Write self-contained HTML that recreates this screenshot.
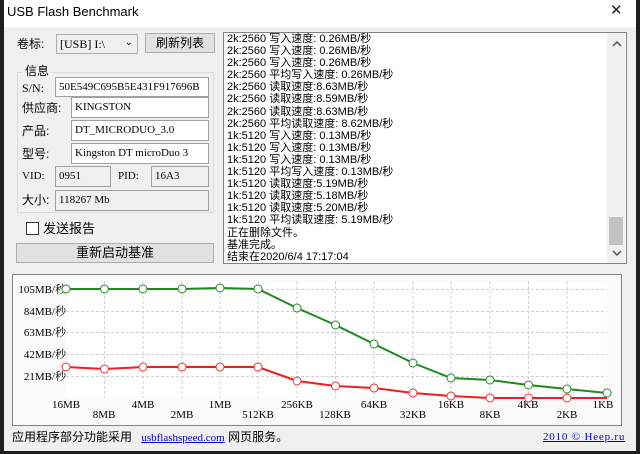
<!DOCTYPE html>
<html><head><meta charset="utf-8"><style>
*{margin:0;padding:0;box-sizing:border-box}
body{width:640px;height:454px;background:#1e1e1e;position:relative;overflow:hidden;font-family:"Liberation Sans","Noto Sans CJK SC",sans-serif;font-size:12px;line-height:14px;color:#000}
.win{position:absolute;left:4px;top:0;width:632px;height:451px;background:#f0f0f0}
.title{position:absolute;left:0;top:0;width:632px;height:27px;background:#fff;font-size:13px;line-height:16px;padding:4px 0 0 3px}
.a{position:absolute}
.fld{position:absolute;background:#fff;border:1px solid #a0a0a0;font-family:"Liberation Serif","Noto Serif CJK SC",serif;font-size:11px;line-height:14px;padding:2px 0 0 3px;white-space:nowrap;overflow:hidden}
.ro{background:#f0f0f0}
.btn{position:absolute;background:#e1e1e1;border:1px solid #adadad;text-align:center;line-height:16px}
.log{position:absolute;left:219px;top:32px;width:404px;height:232px;background:#fff;border:1px solid #828282;font-size:11px;line-height:12.1px;padding:0 0 0 3px;font-family:"Liberation Sans","Noto Sans CJK SC",sans-serif}
.log div{height:12.1px;white-space:nowrap}
</style></head><body>
<div class="win">
<div class="title">USB Flash Benchmark<span class="a" style="left:606px;top:3px;font-size:15px;font-weight:normal;color:#222">✕</span></div>
<div class="a" style="left:13px;top:37px">卷标:</div>
<div class="fld" style="left:52px;top:34px;width:82px;height:20px;background:#f0f0f0;border-color:#adadad;font-size:12px;padding-top:2px">[USB] I:\ <span style="position:absolute;right:4px;top:1px;font-size:10px;font-family:'Liberation Sans'">⌄</span></div>
<div class="btn" style="left:141px;top:33px;width:70px;height:20px;padding-top:1px">刷新列表</div>
<div class="a" style="left:13px;top:72px;width:197px;height:141px;border:1px solid #dcdcdc"></div>
<div class="a" style="left:19px;top:64px;background:#f0f0f0;padding:0 2px">信息</div>
<div class="a" style="left:18px;top:81px;font-family:'Liberation Serif',serif">S/N:</div>
<div class="fld" style="left:51px;top:77px;width:154px;height:20px">50E549C695B5E431F917696B</div>
<div class="a" style="left:18px;top:101px">供应商:</div>
<div class="fld" style="left:67px;top:97px;width:138px;height:21px">KINGSTON</div>
<div class="a" style="left:18px;top:124px">产品:</div>
<div class="fld" style="left:67px;top:120px;width:138px;height:21px">DT_MICRODUO_3.0</div>
<div class="a" style="left:18px;top:147px">型号:</div>
<div class="fld" style="left:67px;top:143px;width:138px;height:21px">Kingston DT microDuo 3</div>
<div class="a" style="left:18px;top:169px;font-family:'Liberation Serif',serif;font-size:11px">VID:</div>
<div class="fld ro" style="left:51px;top:166px;width:56px;height:21px">0951</div>
<div class="a" style="left:114px;top:169px;font-family:'Liberation Serif',serif;font-size:11px">PID:</div>
<div class="fld ro" style="left:147px;top:166px;width:58px;height:21px">16A3</div>
<div class="a" style="left:18px;top:193px">大小:</div>
<div class="fld ro" style="left:51px;top:190px;width:154px;height:21px">118267 Mb</div>
<div class="a" style="left:22px;top:222px;width:13px;height:13px;border:1px solid #333;background:#fff"></div>
<div class="a" style="left:39px;top:222px;font-size:13px">发送报告</div>
<div class="btn" style="left:12px;top:243px;width:198px;height:20px;padding-top:1px;font-size:13px">重新启动基准</div>
<div class="log"><div>2k:2560 写入速度: 0.26MB/秒</div><div>2k:2560 写入速度: 0.26MB/秒</div><div>2k:2560 写入速度: 0.26MB/秒</div><div>2k:2560 平均写入速度: 0.26MB/秒</div><div>2k:2560 读取速度:8.63MB/秒</div><div>2k:2560 读取速度:8.59MB/秒</div><div>2k:2560 读取速度:8.63MB/秒</div><div>2k:2560 平均读取速度: 8.62MB/秒</div><div>1k:5120 写入速度: 0.13MB/秒</div><div>1k:5120 写入速度: 0.13MB/秒</div><div>1k:5120 写入速度: 0.13MB/秒</div><div>1k:5120 平均写入速度: 0.13MB/秒</div><div>1k:5120 读取速度:5.19MB/秒</div><div>1k:5120 读取速度:5.18MB/秒</div><div>1k:5120 读取速度:5.20MB/秒</div><div>1k:5120 平均读取速度: 5.19MB/秒</div><div>正在删除文件。</div><div>基准完成。</div><div>结束在2020/6/4 17:17:04</div>
<div class="a" style="left:383px;top:0;width:18px;height:230px;background:#f0f0f0"></div>
<div class="a" style="left:385px;top:184px;width:14px;height:28px;background:#c2c2c2"></div>
<svg class="a" style="left:388px;top:8px" width="10" height="6"><path d="M1 5L5 1L9 5" fill="none" stroke="#555" stroke-width="1.5"/></svg>
<svg class="a" style="left:388px;top:217px" width="10" height="6"><path d="M1 1L5 5L9 1" fill="none" stroke="#555" stroke-width="1.5"/></svg>
</div>
<svg class="a" style="left:8px;top:274px" width="612" height="153" viewBox="12 274 612 153">
<rect x="12.5" y="274.5" width="609" height="151" fill="#fafafa" stroke="#828282"/>
<rect x="66" y="281" width="541" height="117" fill="#fff"/>
<g stroke="#d0d0d0" stroke-dasharray="3,2" stroke-width="1">
<line x1="66" y1="289.5" x2="607" y2="289.5"/><line x1="66" y1="311.5" x2="607" y2="311.5"/><line x1="66" y1="332.5" x2="607" y2="332.5"/><line x1="66" y1="354.5" x2="607" y2="354.5"/><line x1="66" y1="376.5" x2="607" y2="376.5"/>
<path d="M104.5 281V398M143 281V398M182 281V398M220 281V398M258 281V398M297 281V398M335.5 281V398M374 281V398M413 281V398M451 281V398M490 281V398M528.5 281V398M567 281V398"/>
</g>
<g font-family="Liberation Serif,Noto Serif CJK SC,serif" font-size="11" text-anchor="end">
<text x="66" y="293">105MB/秒</text><text x="66" y="315">84MB/秒</text><text x="66" y="336">63MB/秒</text><text x="66" y="358">42MB/秒</text><text x="66" y="380">21MB/秒</text>
</g>
<g font-family="Liberation Serif,serif" font-size="11" text-anchor="middle">
<text x="66" y="408">16MB</text><text x="143" y="408">4MB</text><text x="220" y="408">1MB</text><text x="297" y="408">256KB</text><text x="374" y="408">64KB</text><text x="451" y="408">16KB</text><text x="528" y="408">4KB</text><text x="603" y="408">1KB</text>
<text x="104" y="418">8MB</text><text x="182" y="418">2MB</text><text x="258" y="418">512KB</text><text x="335" y="418">128KB</text><text x="413" y="418">32KB</text><text x="490" y="418">8KB</text><text x="567" y="418">2KB</text>
</g>
<g fill="#fff" stroke-width="2">
<polyline fill="none" stroke="#1e8a1e" points="66,289 104.5,289 143,289 182,289 220,288 258,289 297,308 335.5,325 374,344 413,363 451,378 490,380 528.5,385 567,389 607,393"/>
<polyline fill="none" stroke="#f01e1e" points="66,367 104.5,369 143,367 182,367 220,367 258,367 297,381 335.5,386 374,388 413,393 451,396 490,398 528.5,398 567,398 607,398"/>
<g stroke="#2a8a2a" stroke-width="1"><circle cx="66" cy="289" r="4"/><circle cx="104.5" cy="289" r="4"/><circle cx="143" cy="289" r="4"/><circle cx="182" cy="289" r="4"/><circle cx="220" cy="288" r="4"/><circle cx="258" cy="289" r="4"/><circle cx="297" cy="308" r="4"/><circle cx="335.5" cy="325" r="4"/><circle cx="374" cy="344" r="4"/><circle cx="413" cy="363" r="4"/><circle cx="451" cy="378" r="4"/><circle cx="490" cy="380" r="4"/><circle cx="528.5" cy="385" r="4"/><circle cx="567" cy="389" r="4"/><circle cx="607" cy="393" r="4"/></g>
<g stroke="#f03030" stroke-width="1"><circle cx="66" cy="367" r="4"/><circle cx="104.5" cy="369" r="4"/><circle cx="143" cy="367" r="4"/><circle cx="182" cy="367" r="4"/><circle cx="220" cy="367" r="4"/><circle cx="258" cy="367" r="4"/><circle cx="297" cy="381" r="4"/><circle cx="335.5" cy="386" r="4"/><circle cx="374" cy="388" r="4"/><circle cx="413" cy="393" r="4"/><circle cx="451" cy="396" r="4"/><circle cx="490" cy="398" r="4"/><circle cx="528.5" cy="398" r="4"/><circle cx="567" cy="398" r="4"/></g>
</g>
</svg>
<div class="a" style="left:8px;top:430px">应用程序部分功能采用 <span style="color:#0000cc;text-decoration:underline;font-family:'Liberation Serif',serif;font-size:11px;margin-left:6px">usbflashspeed.com</span> 网页服务。</div>
<div class="a" style="left:539px;top:430px;color:#0000cc;text-decoration:underline;font-family:'Liberation Serif',serif;font-size:11px;letter-spacing:0.8px">2010 © Heep.ru</div>
</div>
</body></html>
